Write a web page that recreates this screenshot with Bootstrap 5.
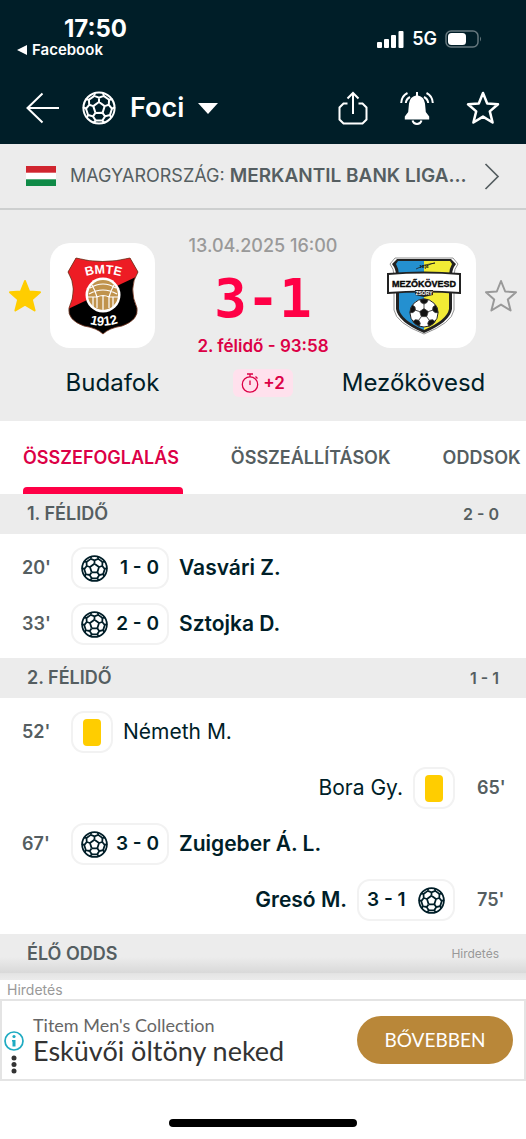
<!DOCTYPE html>
<html lang="hu">
<head>
<meta charset="utf-8">
<meta name="viewport" content="width=device-width, initial-scale=1">
<title>Budafok - Mezőkövesd</title>
<link href="https://cdn.jsdelivr.net/npm/bootstrap@5.3.0/dist/css/bootstrap.min.css" rel="stylesheet">
<style>
  :root { --ink: #001e28; --live: #ff0046; --live-text: #dc0046; --band: #ececec; --muted: #555e61; }
  body { font-family: Inter, "Liberation Sans", sans-serif; color: var(--ink); background: #fff; line-height: 24px; }
  svg { display: block; flex: none; }
  a { color: inherit; text-decoration: none; }
  .plain { border: 0; background: none; padding: 0; color: inherit; }
  .line { fill: none; stroke: currentColor; }

  .topbar { background: var(--ink); color: #fff; height: 144px; }
  .status { height: 72px; padding: 16px 44px 0 16px; }
  .clock { font-size: 24px; font-weight: 700; padding-left: 48px; line-height: 26px; }
  .back-app { font-size: 15px; font-weight: 600; line-height: 16px; }
  .net { font-size: 18px; font-weight: 600; line-height: 30px; }
  .toolbar { height: 72px; padding: 0 26px; }
  .sport { font-size: 27px; font-weight: 600; gap: 14px; margin-left: 22px; }
  .actions { gap: 32px; }

  .league { height: 66px; padding: 0 26px; gap: 14px; background: var(--band); border-bottom: 2px solid #cdcfcf; color: var(--muted); font-size: 18px; }
  .league b { font-size: 19px; font-weight: 600; }

  .match { background: var(--band); padding: 33px 0 23px; }
  .side { width: 50px; height: 105px; }
  .crest { width: 105px; height: 105px; border-radius: 20px; background: #fff; }
  .result { margin-top: -7px; }
  .date { font-size: 18px; font-weight: 500; color: #999; line-height: 20px; }
  .score { font-family: "DejaVu Sans Mono", monospace; font-size: 54px; font-weight: 700; color: var(--live); line-height: 54px; }
  .period { font-size: 17px; font-weight: 600; color: var(--live-text); line-height: 24px; }
  .names { padding-top: 10px; }
  .team { flex: 1 1 0; font-size: 24px; line-height: 30px; }
  .extra { width: 60px; height: 28px; border-radius: 6px; background: #ffe1ed; color: var(--live-text); font-size: 17px; font-weight: 600; }

  .tabs { height: 73px; padding: 0 23px; gap: 48px; overflow: hidden; color: var(--muted); font-size: 18px; font-weight: 600; }
  .tabs a { white-space: nowrap; padding-right: 4px; }
  .tabs a.active { color: var(--live-text); position: relative; }
  .tabs a.active::after { content: ""; position: absolute; left: 0; right: 0; bottom: 0; height: 7px; background: var(--live); border-radius: 4px 4px 0 0; }

  .band { height: 40px; padding: 0 27px; background: var(--band); color: var(--muted); font-size: 18px; font-weight: 600; }
  .half-score { font-size: 16px; }
  .events { padding: 6px 22px; }
  .event { height: 56px; gap: 10px; font-size: 21px; }
  .minute { width: 39px; color: var(--muted); font-size: 18px; font-weight: 600; }
  .event.away .minute { width: 27px; margin-left: 12px; }
  .chip { width: 98px; height: 42px; border: 2px solid #f2f2f2; border-radius: 13px; padding: 0 8px; font-size: 19px; font-weight: 600; white-space: nowrap; }
  .chip-card { width: 42px; padding: 0; }
  .yellow { width: 18px; height: 27px; border-radius: 4px; background: #ffcd00; }
  .scorer { font-weight: 600; }

  .odds { height: 46px; padding: 0 27px 6px; color: var(--muted); font-size: 18px; font-weight: 600;
          background: linear-gradient(#ececec 0 50%, #d9d9d9 84%, #e4e4e4 86%, #ebebeb); }
  .note { font-size: 12px; font-weight: 400; color: #999; }
  .ad-label { height: 19px; padding-left: 7px; line-height: 19px; font-size: 14px; font-weight: 400; color: #999; }
  .ad { height: 82px; border: 2px solid #e4e4e4; padding: 0 11px 0 2px; gap: 9px; font-family: Lato, sans-serif; font-variant-ligatures: none; }
  .ad-name { font-size: 18px; line-height: 22px; color: #666; }
  .ad-title { font-size: 27px; line-height: 30px; color: #333; }
  .cta { width: 156px; height: 48px; border-radius: 24px; background: #b98739; color: #fff; font-size: 19px; }
  .home-bar { width: 188px; height: 8px; border-radius: 4px; background: #000; margin: 38px auto 13px; }
</style>
<script src="https://cdn.jsdelivr.net/npm/bootstrap@5.3.0/dist/js/bootstrap.bundle.min.js"></script>
</head>
<body>
<svg width="0" height="0" class="position-absolute" aria-hidden="true">
  <defs>
    <g id="fifth"><path d="M0-6 5.7-1.9M0-6V-10.3M-4.7-12.1 0-10.3 4.7-12.1 4.1-15.5M4.7-12.1 10.1-8.2M-4.7-12.1-4.1-15.5"/></g>
    <symbol id="ball" viewBox="-17 -17 34 34">
      <circle r="15.6"/>
      <use href="#fifth"/><use href="#fifth" transform="rotate(72)"/><use href="#fifth" transform="rotate(144)"/><use href="#fifth" transform="rotate(216)"/><use href="#fifth" transform="rotate(288)"/>
    </symbol>
    <symbol id="star" viewBox="0 0 34 34"><path d="M17 2 21.2 12.5 32 13.2 23.8 20.4 26.6 31.5 17 25.6 7.4 31.5 10.2 20.4 2 13.2 12.8 12.5Z" stroke-linejoin="round"/></symbol>
  </defs>
</svg>

<header class="topbar">
  <div class="status d-flex justify-content-between">
    <div>
      <div class="clock">17:50</div>
      <a href="#" class="back-app d-flex align-items-center gap-1">
        <svg width="12" height="12" viewBox="0 0 12 12" fill="currentColor"><path d="M1 6 11 1V11Z"/></svg>Facebook</a>
    </div>
    <div class="net d-flex align-items-center align-self-start pt-2 gap-2">
      <svg width="27" height="17" viewBox="0 0 27 17" fill="#fff"><rect y="11" width="5" height="6" rx="1"/><rect x="7" y="8" width="5" height="9" rx="1"/><rect x="14" y="4" width="5" height="13" rx="1"/><rect x="21.500" y="0" width="5" height="17" rx="1"/></svg>
      <span>5G</span>
      <svg width="37" height="18" viewBox="0 0 37 18"><rect x="1" y="1" width="32" height="16" rx="5" fill="none" stroke="#66787e" stroke-width="1.500"/><rect x="3" y="3" width="18" height="12" rx="3.500" fill="#fff"/><path d="M35 6.500q2 2.500 0 5z" fill="#66787e"/></svg>
    </div>
  </div>
  <div class="toolbar d-flex align-items-center">
    <button class="plain" aria-label="Vissza"><svg class="line" width="34" height="32" viewBox="0 0 34 32" stroke-width="2"><path d="M16.500 1.500 1.500 16 16.500 30.500M1.500 16H33"/></svg></button>
    <button class="plain d-flex align-items-center sport">
      <svg class="line" width="34" height="34" stroke-width="2"><use href="#ball"/></svg>
      <span>Foci</span>
      <svg width="20" height="11" viewBox="0 0 20 11" fill="currentColor"><path d="M0 0H20L10 11Z"/></svg>
    </button>
    <div class="actions d-flex align-items-center ms-auto">
      <button class="plain" aria-label="Megosztás"><svg class="line" width="30" height="34" viewBox="0 0 30 34" stroke-width="2"><path d="M9.500 12.500H5.500L1.500 16.500V28.500L5.500 32.500H24.500L28.500 28.500V16.500L24.500 12.500H20.500M15 23V2M9.500 7.500 15 2 20.500 7.500"/></svg></button>
      <button class="plain" aria-label="Értesítések"><svg width="34" height="34" viewBox="0 0 34 34"><path fill="#fff" d="M16 1h2v3.500q6 1 7 8l.8 8.500 3.400 4.500v3H4.800v-3L8.200 21 9 12.500q1-7 7-8z"/><g class="line" stroke-width="2"><path d="M12.500 29.500q1 3.500 4.500 3.500t4.500-3.500M7.500 2Q1.500 5 1.200 12M10 6Q6.200 8 5.800 12M26.500 2q6 3 6.300 10M24 6q3.800 2 4.200 6"/></g></svg></button>
      <button class="plain" aria-label="Kedvenc"><svg class="line" width="34" height="34" stroke-width="2.500"><use href="#star"/></svg></button>
    </div>
  </div>
</header>

<a href="#" class="league d-flex align-items-center">
  <svg width="30" height="20" viewBox="0 0 30 20"><path fill="#fff" d="M0 0H30V20H0z"/><path fill="#d0252f" d="M0 0H30V6.700H0z"/><path fill="#0f8a47" d="M0 13.300H30V20H0z"/></svg>
  <span class="text-truncate flex-fill">MAGYARORSZÁG: <b>MERKANTIL BANK LIGA...</b></span>
  <svg class="line" width="16" height="27" viewBox="0 0 16 27" stroke-width="1.700"><path d="M1.500 1 14 13.500 1.500 26"/></svg>
</a>

<section class="match">
  <div class="d-flex">
    <button class="plain side d-flex justify-content-center align-items-center" aria-label="Budafok kedvenc"><svg width="34" height="34" fill="#ffcd00" stroke="#ffcd00" stroke-width="2"><use href="#star"/></svg></button>
    <div class="crest d-flex justify-content-center align-items-center">
      <svg width="74" height="80" viewBox="0 0 74 80" role="img" aria-label="Budafok címer">
        <defs><clipPath id="shield"><path d="M10 2Q36 9 64 2L72 16Q62 32 71 52Q73 64 56 70Q43 72 37 78Q31 72 18 70Q1 64 3 52Q12 32 2 16Z"/></clipPath></defs>
        <g clip-path="url(#shield)"><path fill="#000" d="M0 0H74V80H0z"/><path fill="#ed1c24" d="M0 0H74V19L0 54z"/></g>
        <path d="M10 2Q36 9 64 2L72 16Q62 32 71 52Q73 64 56 70Q43 72 37 78Q31 72 18 70Q1 64 3 52Q12 32 2 16Z" fill="none" stroke="#7c3b25" stroke-width=".8"/>
        <circle cx="37" cy="39" r="17.500" fill="#fff"/><circle cx="37" cy="39" r="15" fill="#c0934c"/>
        <g fill="none" stroke="#fff" stroke-width="1.200"><path d="M24 32q13-8 26 0M23 38q14-8 28 0M26 29q3 5 5 12v11M48 29q-3 5-5 12v11M22 41h9q6-3 12 0h9M37 40v14M27 41v10M47 41v10"/></g>
        <path id="arcTop" d="M18 21Q37 14 57 21" fill="none"/><path id="arcLow" d="M21 67Q37 73 55 66" fill="none"/>
        <g fill="#fff" font-family="Liberation Sans, sans-serif" font-weight="700" text-anchor="middle"><text font-size="12.500"><textPath href="#arcTop" startOffset="50%">BMTE</textPath></text><text font-size="13"><textPath href="#arcLow" startOffset="50%">1912</textPath></text></g>
      </svg>
    </div>
    <div class="result flex-fill text-center">
      <div class="date text-nowrap">13.04.2025 16:00</div>
      <div class="score mt-3">3-1</div>
      <div class="period text-nowrap mt-2">2. félidő - 93:58</div>
    </div>
    <div class="crest d-flex justify-content-center align-items-center">
      <svg width="74" height="80" viewBox="0 0 74 80" role="img" aria-label="Mezőkövesd címer">
        <path d="M8 2H66L71 8Q67 13 67 19V54Q65 67 37 78Q9 67 7 54V19Q7 13 3 8Z" fill="#fff" stroke="#777" stroke-width=".8"/>
        <path d="M10 3H64L69 8Q65 13 65 19V53Q63 66 37 77Q11 66 9 53V19Q9 13 5 8Z" fill="#222"/>
        <path d="M11 5H37V74Q14 64 12 53V19Q12 13 9 8Z" fill="#2490d0"/><path d="M63 5H37V74Q60 64 62 53V19Q62 13 65 8Z" fill="#f2eb35"/>
        <path d="M29 13q8-5 19-6-8 1-10 6" fill="none" stroke="#222" stroke-width=".8"/><text x="37" y="12" font-size="4" text-anchor="middle" font-family="Liberation Sans, sans-serif" font-weight="700">1975</text>
        <path d="M1 18Q37 15 73 18V37Q37 34 1 37Z" fill="#fff" stroke="#222" stroke-width="2"/>
        <text x="37" y="31" font-size="9" text-anchor="middle" font-family="Liberation Sans, sans-serif" font-weight="700" stroke="#111" stroke-width=".4">MEZŐKÖVESD</text>
        <path d="M28 34H46V39L37 41 28 39Z" fill="#222"/><text x="37" y="39" font-size="5" fill="#fff" text-anchor="middle" font-family="Liberation Sans, sans-serif" font-weight="700">ZSÓRY</text>
        <circle cx="37" cy="57" r="14" fill="#fff" stroke="#222"/>
        <g fill="#111" stroke="#333" stroke-width=".8"><path d="M37 52.500 41.300 55.600 39.700 60.600H34.300L32.700 55.600Z"/><path id="patch" d="M33 43.500q4-1.200 8 0L40 46.500 37 48 34 46.500ZM37 48V52.500"/><use href="#patch" transform="rotate(72 37 57)"/><use href="#patch" transform="rotate(144 37 57)"/><use href="#patch" transform="rotate(216 37 57)"/><use href="#patch" transform="rotate(288 37 57)"/></g>
      </svg>
    </div>
    <button class="plain side d-flex justify-content-center align-items-center" aria-label="Mezőkövesd kedvenc"><svg class="line" color="#999" width="34" height="34" stroke-width="2"><use href="#star"/></svg></button>
  </div>
  <div class="names d-flex align-items-center justify-content-center">
    <div class="team text-center">Budafok</div>
    <div class="px-2"><div class="extra d-flex align-items-center justify-content-center gap-1">
      <svg class="line" width="18" height="20" viewBox="0 0 18 20" stroke-width="1.300"><circle cx="9" cy="11.500" r="7.700"/><path d="M9 12V7.500M6 1H12M9 1V4M14.500 3.500 16.500 5.500"/></svg>+2</div></div>
    <div class="team text-center">Mezőkövesd</div>
  </div>
</section>

<nav class="tabs d-flex">
  <a href="#" class="active d-flex align-items-center">ÖSSZEFOGLALÁS</a>
  <a href="#" class="d-flex align-items-center">ÖSSZEÁLLÍTÁSOK</a>
  <a href="#" class="d-flex align-items-center">ODDSOK</a>
</nav>

<main>
  <div class="band d-flex align-items-center justify-content-between"><span>1. FÉLIDŐ</span><span class="half-score">2 - 0</span></div>
  <div class="events">
    <div class="event d-flex align-items-center"><span class="minute">20'</span><span class="chip d-flex align-items-center justify-content-between"><svg class="line" width="27" height="27" stroke-width="2.200"><use href="#ball"/></svg>1 - 0</span><a href="#" class="scorer">Vasvári Z.</a></div>
    <div class="event d-flex align-items-center"><span class="minute">33'</span><span class="chip d-flex align-items-center justify-content-between"><svg class="line" width="27" height="27" stroke-width="2.200"><use href="#ball"/></svg>2 - 0</span><a href="#" class="scorer">Sztojka D.</a></div>
  </div>
  <div class="band d-flex align-items-center justify-content-between"><span>2. FÉLIDŐ</span><span class="half-score">1 - 1</span></div>
  <div class="events">
    <div class="event d-flex align-items-center"><span class="minute">52'</span><span class="chip chip-card d-flex align-items-center justify-content-center"><span class="yellow"></span></span><a href="#">Németh M.</a></div>
    <div class="event away d-flex align-items-center justify-content-end"><a href="#">Bora Gy.</a><span class="chip chip-card d-flex align-items-center justify-content-center"><span class="yellow"></span></span><span class="minute">65'</span></div>
    <div class="event d-flex align-items-center"><span class="minute">67'</span><span class="chip d-flex align-items-center justify-content-between"><svg class="line" width="27" height="27" stroke-width="2.200"><use href="#ball"/></svg>3 - 0</span><a href="#" class="scorer">Zuigeber Á. L.</a></div>
    <div class="event away d-flex align-items-center justify-content-end"><a href="#" class="scorer">Gresó M.</a><span class="chip d-flex align-items-center justify-content-between">3 - 1<svg class="line" width="27" height="27" stroke-width="2.200"><use href="#ball"/></svg></span><span class="minute">75'</span></div>
  </div>
  <div class="odds d-flex align-items-center justify-content-between"><span>ÉLŐ ODDS</span><span class="note">Hirdetés</span></div>
</main>

<footer>
  <div class="ad-label">Hirdetés</div>
  <div class="ad d-flex align-items-center">
    <div class="d-flex flex-column align-items-center align-self-end pb-1 gap-1">
      <svg width="20" height="20" viewBox="0 0 20 20"><circle cx="10" cy="10" r="9" fill="none" stroke="#1fabc2" stroke-width="1.700"/><circle cx="10" cy="5.500" r="1.600" fill="#1fabc2"/><path d="M8 9h3.500v6.500H8.500v-5H8z" fill="#1fabc2"/></svg>
      <svg width="6" height="20" viewBox="0 0 6 20" fill="#333"><circle cx="3" cy="3" r="2.500"/><circle cx="3" cy="9.500" r="2.500"/><circle cx="3" cy="16" r="2.500"/></svg>
    </div>
    <div class="flex-fill"><div class="ad-name">Titem Men's Collection</div><div class="ad-title">Esküvői öltöny neked</div></div>
    <button class="btn cta p-0">BŐVEBBEN</button>
  </div>
  <div class="home-bar"></div>
</footer>
</body>
</html>
